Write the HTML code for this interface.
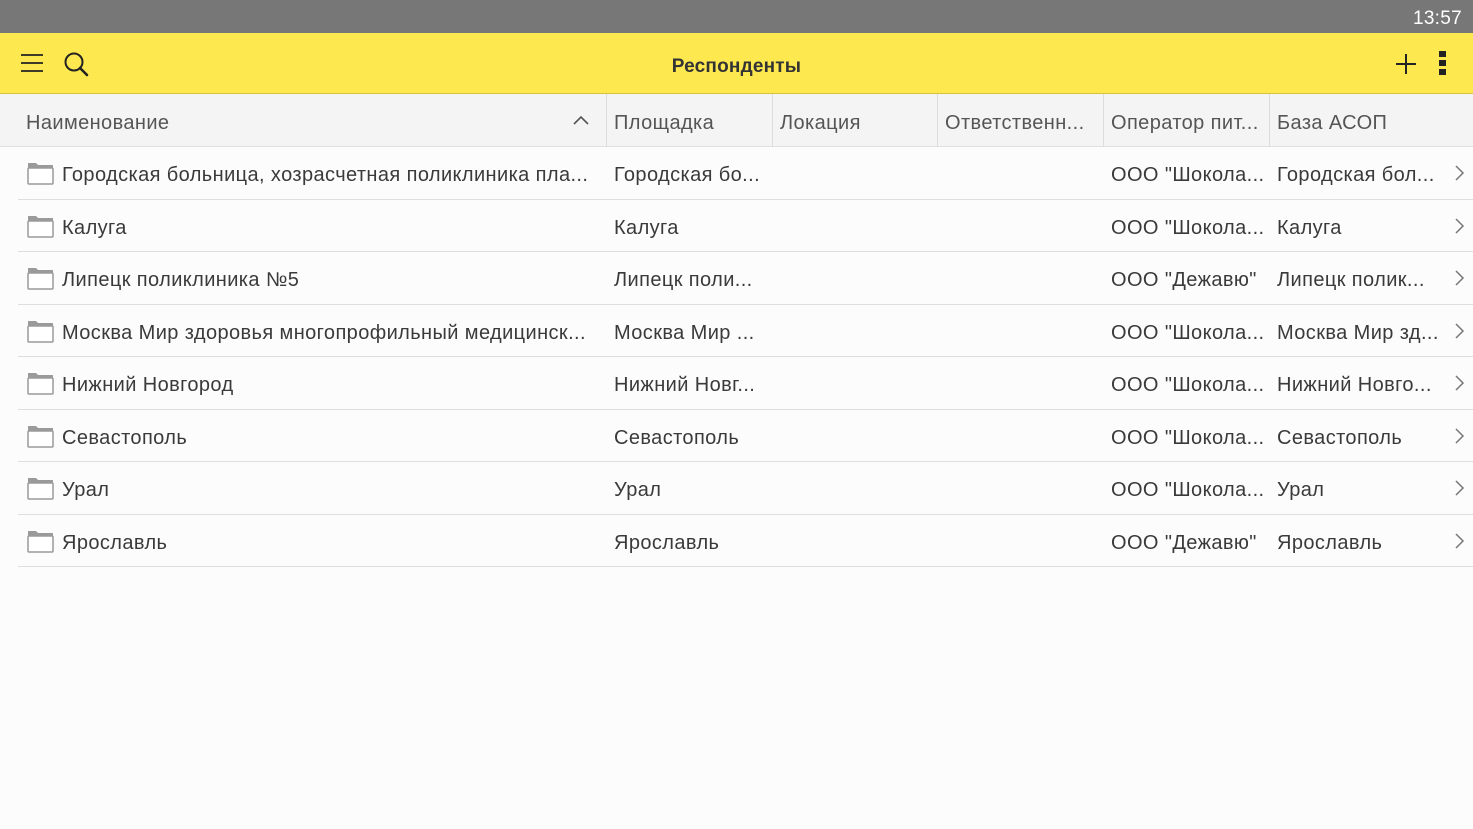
<!DOCTYPE html>
<html><head><meta charset="utf-8"><style>
*{margin:0;padding:0;box-sizing:border-box}
body{width:1473px;height:829px;overflow:hidden;background:#fcfcfc;font-family:"Liberation Sans","DejaVu Sans",sans-serif;position:relative;color:#3c3c3c}
.status{position:absolute;left:0;top:0;width:1473px;height:33px;background:#777}
.status span{position:absolute;right:11px;top:8px;color:#fff;font-size:19px;letter-spacing:0.3px}
.bar{position:absolute;left:0;top:33px;width:1473px;height:61px;background:#fde84f;border-bottom:1px solid #d8c23a}
.title{position:absolute;left:0;width:1473px;top:23px;text-align:center;font-weight:bold;font-size:19px;color:#333;letter-spacing:0.2px}
.hdr{position:absolute;left:0;top:94px;width:1473px;height:53px;background:#f4f4f4;border-bottom:1px solid #e0e0e0}
.c{position:absolute;white-space:nowrap;font-size:20px;letter-spacing:0.4px}
.hdr .c{top:18px;color:#555}
.vl{position:absolute;top:0;width:1px;height:53px;background:#dcdcdc}
.row{position:absolute;left:0;width:1473px;height:52.5px}
.row .sep{position:absolute;left:18px;right:0;bottom:0;height:1px;background:#dedede}
.row .c{top:17px;color:#3a3a3a}
.fold{position:absolute;left:27px;top:15px}
.chev{position:absolute;left:1454px;top:17px}
</style></head><body>
<div class="status"><span>13:57</span></div>
<div class="bar">
<svg style="position:absolute;left:20px;top:20px" width="24" height="20"><path d="M1 2H23M1 10H23M1 18H23" stroke="#222" stroke-width="1.8"/></svg>
<svg style="position:absolute;left:63px;top:18px" width="28" height="28"><circle cx="11" cy="11" r="8.5" fill="none" stroke="#222" stroke-width="2"/><path d="M17 17L24 24" stroke="#222" stroke-width="2.6" stroke-linecap="round"/></svg>
<div class="title">Респонденты</div>
<svg style="position:absolute;left:1395px;top:20px" width="22" height="22"><path d="M11 1V21M1 11H21" stroke="#222" stroke-width="2"/></svg>
<svg style="position:absolute;left:1438px;top:17px" width="10" height="28"><rect x="1" y="1" width="7" height="6" fill="#222"/><rect x="1" y="10" width="7" height="6" fill="#222"/><rect x="1" y="19" width="7" height="6" fill="#222"/></svg>
</div>
<div class="hdr">
<div class="c" style="left:26px">Наименование</div>
<svg style="position:absolute;left:572px;top:20px" width="18" height="12"><path d="M2 10L9 3L16 10" fill="none" stroke="#555" stroke-width="1.6"/></svg>
<div class="vl" style="left:606px"></div><div class="c" style="left:614px">Площадка</div>
<div class="vl" style="left:772px"></div><div class="c" style="left:780px">Локация</div>
<div class="vl" style="left:937px"></div><div class="c" style="left:945px">Ответственн...</div>
<div class="vl" style="left:1103px"></div><div class="c" style="left:1111px">Оператор пит...</div>
<div class="vl" style="left:1269px"></div><div class="c" style="left:1277px">База АСОП</div>
</div>
<div id="rows"></div>
<script>
var d=[["Городская больница, хозрасчетная поликлиника пла...","Городская бо...","ООО \"Шокола...","Городская бол..."],
["Калуга","Калуга","ООО \"Шокола...","Калуга"],
["Липецк поликлиника №5","Липецк поли...","ООО \"Дежавю\"","Липецк полик..."],
["Москва Мир здоровья многопрофильный медицинск...","Москва Мир ...","ООО \"Шокола...","Москва Мир зд..."],
["Нижний Новгород","Нижний Новг...","ООО \"Шокола...","Нижний Новго..."],
["Севастополь","Севастополь","ООО \"Шокола...","Севастополь"],
["Урал","Урал","ООО \"Шокола...","Урал"],
["Ярославль","Ярославль","ООО \"Дежавю\"","Ярославль"]];
var h="";
d.forEach(function(r,i){
h+='<div class="row" style="top:'+(147+i*52.5)+'px">'+
'<svg class="fold" width="27" height="23"><path d="M1 3V1.5Q1 1 1.5 1H9L11 3H25.5Q26 3 26 3.5V6H1Z" fill="#9a9a9a"/><rect x="1" y="6" width="25" height="16" rx="1" fill="#fff" stroke="#9a9a9a" stroke-width="1.5"/></svg>'+
'<div class="c" style="left:62px">'+r[0]+'</div><div class="c" style="left:614px">'+r[1]+'</div>'+
'<div class="c" style="left:1111px">'+r[2]+'</div><div class="c" style="left:1277px">'+r[3]+'</div>'+
'<svg class="chev" width="12" height="18"><path d="M2 2L9 9L2 16" fill="none" stroke="#777" stroke-width="1.5"/></svg>'+
'<div class="sep"></div></div>';});
document.getElementById("rows").innerHTML=h;
</script>
</body></html>
